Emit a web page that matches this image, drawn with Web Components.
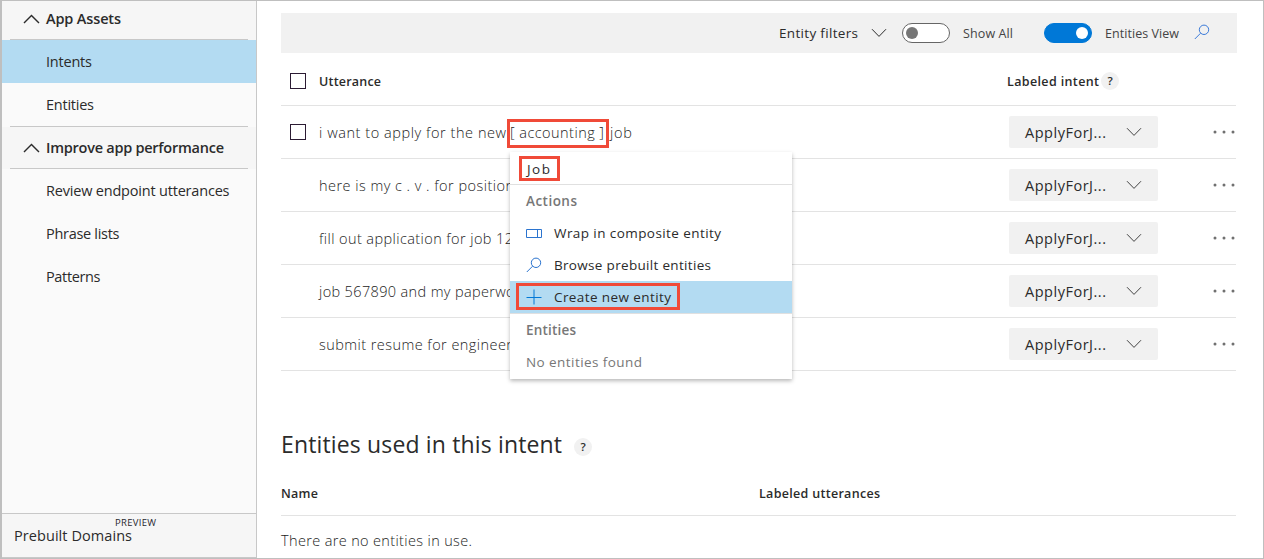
<!DOCTYPE html>
<html lang="en">
<head>
<meta charset="utf-8">
<title>Intents</title>
<style>
body{margin:0;background:#fff;font-family:"Open Sans","Noto Sans",sans-serif;font-size:14px;color:#2b2b2b;overflow:hidden}
</style>
</head>
<body>
<luis-app></luis-app>
<script>
const define = (name, css, html, ready) => customElements.define(name, class extends HTMLElement {
  constructor() {
    super();
    const t = document.createElement('template');
    t.innerHTML = `<style>*{box-sizing:border-box}${css}</style>${html}`;
    this.attachShadow({mode: 'open'}).append(t.content.cloneNode(true));
  }
  connectedCallback() { if (ready) ready.call(this); }
});

// Single line label; tracking is spread so the text fills the width in "w".
define('ui-label', `:host{display:block;flex:none;white-space:pre;line-height:20px}span{display:inline-block}`, `<span><slot></slot></span>`, function () {
  const w = parseFloat(this.getAttribute('w'));
  const size = this.getAttribute('size');
  if (size) this.style.fontSize = size + 'px';
  this.style.width = w + 'px';
  const span = this.shadowRoot.querySelector('span');
  span.style.letterSpacing = '0px';
  const natural = span.getBoundingClientRect().width;
  span.style.letterSpacing = (w - natural) / (this.textContent.length - 1) + 'px';
});

const icons = {
  down: [16, 10, '<path d="M1 1.2 8 8.4 15 1.2"/>'],
  up: [17, 10, '<path d="M1 9 8.5 1.4 16 9" stroke-width="1.4"/>'],
  search: [16, 16, '<circle cx="10" cy="5.8" r="4.7"/><path d="M6.6 9.2 .8 15"/>'],
  plus: [16, 16, '<path d="M8 .5v15M.5 8.5h15"/>'],
  composite: [16, 9, '<path d="M.5.5h15v8H.5zM11.5.5v8"/>'],
  dots: [22, 4, '<g fill="currentColor" stroke="none"><circle cx="2" cy="2" r="1.5"/><circle cx="11" cy="2" r="1.5"/><circle cx="20" cy="2" r="1.5"/></g>']
};
define('ui-icon', `:host{display:block;flex:none}svg{display:block}`, ``, function () {
  const [w, h, d] = icons[this.getAttribute('name')];
  const t = document.createElement('template');
  t.innerHTML = `<svg width="${w}" height="${h}" viewBox="0 0 ${w} ${h}" fill="none" stroke="currentColor" stroke-width="1">${d}</svg>`;
  this.shadowRoot.append(t.content);
});

define('ui-toggle', `:host{display:flex;align-items:center;width:48px;height:20px;border-radius:10px;border:1px solid #666;background:#fff;padding:0 3px;box-sizing:border-box;flex:none}
i{width:12px;height:12px;border-radius:50%;background:#767676}
:host([on]){background:#0078d7;border-color:#0078d7;justify-content:flex-end}:host([on]) i{background:#fff}`, `<i></i>`);

define('ui-checkbox', `:host{display:block;flex:none;width:16px;height:16px;border:1px solid #2b1b33;background:#fff;box-sizing:border-box}`, ``);

define('help-dot', `:host{display:flex;flex:none;width:18px;height:18px;border-radius:50%;background:#f1f1f1;align-items:center;justify-content:center;font-size:11.5px;font-weight:600;line-height:18px}`, `<span>?</span>`);

define('nav-item', `:host{display:flex;align-items:center;height:43px;padding-left:44px;font-size:14.5px}:host([active]){background:#b3dbf2}`, `<slot></slot>`);

define('nav-head', `:host{display:block;background:#f6f6f6;font-weight:600;font-size:14.5px}
.r{display:flex;align-items:center;gap:6px;padding:0 0 var(--b,0) 21px;height:var(--h,41px)}hr{margin:0 8px;border:0;height:1px;background:#c8c8c8}`,
`<div class="r"><ui-icon name="up"></ui-icon><slot></slot></div><hr>`);

define('side-nav', `:host{display:flex;flex-direction:column;width:255px;border-right:1px solid #c8c8c8;background:#fafafa;box-sizing:border-box;flex:none}
nav{flex:1}hr{margin:0 8px;border:0;height:1px;background:#c8c8c8}
footer{height:45px;border-top:1px solid #c8c8c8;border-bottom:1px solid #c8c8c8;background:#f6f6f6;padding:3px 0 0 12px}
.p{margin-left:101px;line-height:12px;color:#26262e}.d{line-height:20px;margin-top:-3px}`,
`<nav><nav-head style="--h:38px;--b:2px"><ui-label w="75">App Assets</ui-label></nav-head>
<nav-item active><ui-label w="46">Intents</ui-label></nav-item>
<nav-item><ui-label w="48">Entities</ui-label></nav-item><hr>
<nav-head><ui-label w="178">Improve app performance</ui-label></nav-head>
<nav-item><ui-label w="183.5">Review endpoint utterances</ui-label></nav-item>
<nav-item><ui-label w="73.5">Phrase lists</ui-label></nav-item>
<nav-item><ui-label w="54.5">Patterns</ui-label></nav-item></nav>
<footer><ui-label class="p" size="9.5" w="41">PREVIEW</ui-label><ui-label class="d" size="14.5" w="118">Prebuilt Domains</ui-label></footer>`);

define('filter-bar', `:host{display:flex;align-items:center;height:40px;width:956px;background:#f1f1f1;padding-left:498px;box-sizing:border-box}
.s{color:#444;padding-top:1px}`,
`<ui-label size="13.5" w="79">Entity filters</ui-label><ui-icon name="down" style="margin:-1px 15px 0 13px"></ui-icon>
<ui-toggle></ui-toggle><ui-label class="s" size="12.5" w="50" style="margin:0 31px 0 13px">Show All</ui-label>
<ui-toggle on></ui-toggle><ui-label class="s" size="12.5" w="74" style="margin:0 15px 0 13px">Entities View</ui-label>
<ui-icon name="search" style="color:#3c7bd9;margin-top:-3px"></ui-icon>`);

define('utterance-row', `:host{display:flex;align-items:center;height:53px;width:955px;border-bottom:1px solid #e3e3e3;box-sizing:border-box;padding-left:9px}
.c{width:16px;margin-right:13px}.t{display:flex;flex:1;align-items:center;font-size:14.5px;font-weight:300;color:#1c1c1c;padding-top:1px}
.b{display:flex;align-items:center;width:149px;height:32px;background:#f1f1f1;border-radius:2px;padding-left:16px;font-size:14.5px}
.b ui-icon{margin:0 0 1px 20px;color:#444}.b ui-label{padding-top:1px}.m{margin:0 1px 1px 55px;color:#707070}`,
`<div class="c"><slot name="check"></slot></div><div class="t"><slot></slot></div>
<div class="b"><ui-label w="81">ApplyForJ...</ui-label><ui-icon name="down"></ui-icon></div><ui-icon class="m" name="dots"></ui-icon>`);

define('red-mark', `:host{display:block;position:absolute;border:3px solid #f04a38;box-sizing:border-box;pointer-events:none}`, ``);

define('menu-row', `:host{display:flex;align-items:center;height:32px;padding-left:16px;font-size:13.5px}
:host([active]){background:#b3dbf2}:host([head]){font-weight:600;color:#777}:host([muted]){color:#777}
::slotted(ui-icon){color:#2b74cf;margin-right:12px}`, `<slot></slot>`);

define('entity-menu', `:host{display:block;width:282px;background:#fff;box-shadow:0 2px 4px rgba(0,0,0,.28);position:absolute;z-index:2;height:227px}
hr{margin:0;border:0;height:1px;background:#e0e0e0}`,
`<menu-row><ui-label w="23" style="margin-left:1px;padding-top:1px">Job</ui-label></menu-row><hr>
<menu-row head><ui-label w="51">Actions</ui-label></menu-row>
<menu-row><ui-icon name="composite"></ui-icon><ui-label w="167">Wrap in composite entity</ui-label></menu-row>
<menu-row><ui-icon name="search"></ui-icon><ui-label w="157">Browse prebuilt entities</ui-label></menu-row>
<menu-row active><ui-icon name="plus" style="color:#0078d7"></ui-icon><ui-label w="117">Create new entity</ui-label></menu-row><hr>
<menu-row head><ui-label w="50">Entities</ui-label></menu-row>
<menu-row muted><ui-label w="116">No entities found</ui-label></menu-row>
<red-mark style="left:9px;top:4px;width:41px;height:25px"></red-mark>
<red-mark style="left:6px;top:131px;width:164px;height:27px"></red-mark>`);

define('utterance-table', `:host{display:block;position:relative}
header{display:flex;align-items:center;height:53px;width:955px;border-bottom:1px solid #e3e3e3;padding:4px 0 0 9px;font-weight:600;font-size:12.5px}
header ui-label{padding-top:1px}entity-menu{left:229px;top:99px}`,
`<header><ui-checkbox style="margin-right:13px"></ui-checkbox><ui-label w="62">Utterance</ui-label>
<ui-label w="92" style="margin-left:626px;margin-right:2px">Labeled intent</ui-label><help-dot></help-dot></header>
<utterance-row><ui-checkbox slot="check"></ui-checkbox><ui-label w="187">i want to apply for the new</ui-label><ui-label w="94" style="margin:0 6px 0 4px">[ accounting ]</ui-label><ui-label w="22">job</ui-label></utterance-row>
<utterance-row><ui-label w="195">here is my c . v . for position</ui-label></utterance-row>
<utterance-row><ui-label w="194">fill out application for job 12</ui-label></utterance-row>
<utterance-row><ui-label w="209">job 567890 and my paperwork</ui-label></utterance-row>
<utterance-row><ui-label w="193">submit resume for engineer</ui-label></utterance-row>
<red-mark style="left:226px;top:66px;width:102px;height:29px"></red-mark>
<entity-menu></entity-menu>`);

define('entities-section', `:host{display:block;width:955px;padding-top:58px}
.h{display:flex;align-items:center;height:30px}.h ui-label{line-height:30px}
.n{display:flex;align-items:center;height:57px;border-bottom:1px solid #e3e3e3;font-weight:600;font-size:12.5px;padding-top:14px}
.e{padding-top:15px;color:#1c1c1c;font-weight:300}`,
`<div class="h"><ui-label size="23" w="281">Entities used in this intent</ui-label><help-dot style="margin:5px 0 0 12px"></help-dot></div>
<div class="n"><ui-label w="37">Name</ui-label><ui-label w="121" style="margin-left:441px">Labeled utterances</ui-label></div>
<div class="e"><ui-label size="14.5" w="191">There are no entities in use.</ui-label></div>`);

define('luis-app', `:host{display:flex;width:1264px;height:559px;box-sizing:border-box;border:1px solid #bfbfbf;border-left-width:2px;overflow:hidden}
main{padding:12px 0 0 24px;flex:1}`,
`<side-nav></side-nav><main><filter-bar></filter-bar><utterance-table></utterance-table><entities-section></entities-section></main>`);
</script>
</body>
</html>
